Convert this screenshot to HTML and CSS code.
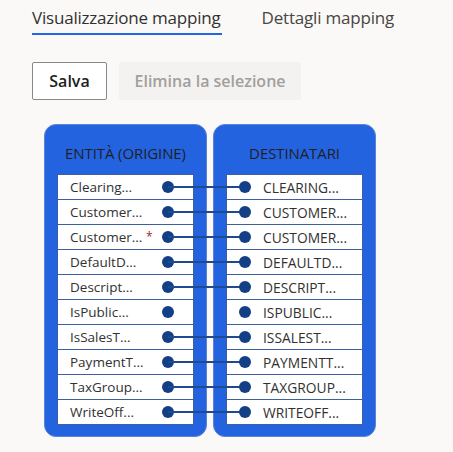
FILE: index.html
```html
<!DOCTYPE html>
<html lang="it">
<head>
<meta charset="utf-8">
<link rel="stylesheet" href="styles.css">
</head>
<body>
<div class="tabs">
  <div class="tab active">Visualizzazione mapping</div>
  <div class="tab">Dettagli mapping</div>
</div>
<div class="toolbar">
  <button class="btn btn-primary">Salva</button>
  <button class="btn btn-disabled">Elimina la selezione</button>
</div>
<div class="panels">
  <div class="panel">
    <div class="panel-title">ENTITÀ (ORIGINE)</div>
    <div class="list">
      <div class="row src"><span class="label">Clearing...</span><span class="dot linked"></span></div>
      <div class="row src"><span class="label">Customer...</span><span class="dot linked"></span></div>
      <div class="row src"><span class="label">Customer... <span class="req">*</span></span><span class="dot linked"></span></div>
      <div class="row src"><span class="label">DefaultD...</span><span class="dot linked"></span></div>
      <div class="row src"><span class="label">Descript...</span><span class="dot linked"></span></div>
      <div class="row src"><span class="label">IsPublic...</span><span class="dot"></span></div>
      <div class="row src"><span class="label">IsSalesT...</span><span class="dot linked"></span></div>
      <div class="row src"><span class="label">PaymentT...</span><span class="dot linked"></span></div>
      <div class="row src"><span class="label">TaxGroup...</span><span class="dot linked"></span></div>
      <div class="row src"><span class="label">WriteOff...</span><span class="dot linked"></span></div>
    </div>
  </div>
  <div class="panel">
    <div class="panel-title">DESTINATARI</div>
    <div class="list">
      <div class="row dst"><span class="dot"></span><span class="label">CLEARING...</span></div>
      <div class="row dst"><span class="dot"></span><span class="label">CUSTOMER...</span></div>
      <div class="row dst"><span class="dot"></span><span class="label">CUSTOMER...</span></div>
      <div class="row dst"><span class="dot"></span><span class="label">DEFAULTD...</span></div>
      <div class="row dst"><span class="dot"></span><span class="label">DESCRIPT...</span></div>
      <div class="row dst"><span class="dot"></span><span class="label">ISPUBLIC...</span></div>
      <div class="row dst"><span class="dot"></span><span class="label">ISSALEST...</span></div>
      <div class="row dst"><span class="dot"></span><span class="label">PAYMENTT...</span></div>
      <div class="row dst"><span class="dot"></span><span class="label">TAXGROUP...</span></div>
      <div class="row dst"><span class="dot"></span><span class="label">WRITEOFF...</span></div>
    </div>
  </div>
</div>
</body>
</html>
```
FILE: styles.css
```css
* { box-sizing: border-box; }
html, body { margin: 0; padding: 0; }
body {
  background: #faf9f8;
  font-family: "Open Sans", "Noto Sans", sans-serif;
  color: #323130;
  width: 453px;
  height: 452px;
  overflow: hidden;
}
.tabs {
  display: flex;
  gap: 40px;
  padding: 5px 0 0 32px;
}
.tab {
  font-size: 17px;
  line-height: 26px;
  padding-bottom: 2px;
  color: #323130;
  letter-spacing: -0.2px;
}
.tab.active {
  border-bottom: 2px solid #2266e3;
  padding-right: 1px;
}
.tab:not(.active) { color: #484644; }
.toolbar {
  display: flex;
  gap: 12px;
  padding: 27px 0 0 32px;
}
.btn {
  font-family: inherit;
  font-size: 16px;
  font-weight: 600;
  height: 38px;
  border-radius: 2px;
  padding: 0;
}
.btn-primary {
  width: 75px;
  background: #ffffff;
  border: 1px solid #8a8886;
  color: #201f1e;
}
.btn-disabled {
  width: 182px;
  background: #f3f2f1;
  border: 1px solid #f3f2f1;
  color: #a19f9d;
}
.panels {
  display: flex;
  gap: 6px;
  padding: 24px 0 0 44px;
}
.panel {
  width: 163px;
  height: 313px;
  background: #2463e0;
  border: 1px solid #5b83d6;
  border-radius: 12px;
  padding: 0 12px 12px;
}
.panel-title {
  height: 49px;
  font-size: 15px;
  text-align: center;
  padding-top: 18px;
  color: #201f1e;
  letter-spacing: -0.1px;
}
.list {
  background: #ffffff;
  border: 1px solid #3d5fa0;
}
.row {
  height: 25px;
  display: flex;
  align-items: center;
  font-size: 13.5px;
  color: #323130;
  border-top: 1px solid #3d5fa0;
  position: relative;
}
.row:first-child { border-top: none; height: 24px; }
.row.src { padding-left: 12px; justify-content: space-between; padding-right: 19px; }
.row.dst { padding-left: 12px; }
.row.dst .label { margin-left: 12px; font-size: 13.8px; }
.dot {
  width: 12px;
  height: 12px;
  border-radius: 50%;
  background: #123f85;
  flex: none;
  position: relative;
}
.dot.linked::after {
  content: "";
  position: absolute;
  left: 6px;
  top: 5px;
  width: 75px;
  height: 2px;
  background: #1f4a8e;
  z-index: 1;
}
.dst .dot { z-index: 2; }
.req { color: #a4262c; font-size: 12px; vertical-align: top; }
```
